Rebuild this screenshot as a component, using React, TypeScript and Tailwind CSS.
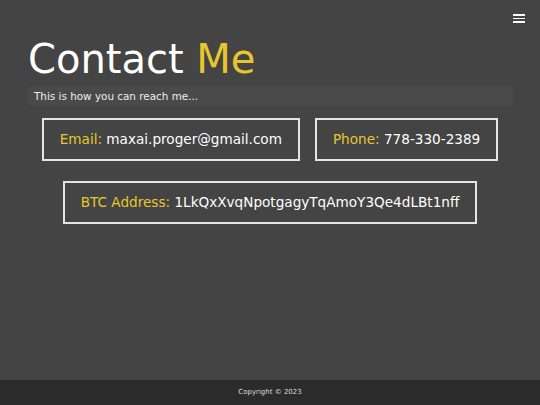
export default function App() {
  return (
    <div
      className="flex h-[405px] w-[540px] flex-col bg-[#444444] text-white"
      style={{ fontFamily: '"DejaVu Sans", Verdana, sans-serif' }}
    >
      <header className="flex h-[36px] items-start justify-end px-[15px] pt-[14px]">
        <button className="flex w-[12px] flex-col gap-[2px]" aria-label="Menu">
          <span className="block h-[1.5px] w-full bg-white" />
          <span className="block h-[1.5px] w-full bg-white" />
          <span className="block h-[1.5px] w-full bg-white" />
        </button>
      </header>

      <main className="flex-1 px-[28px]">
        <h1 className="text-[40px] leading-[46px]">
          Contact <span className="text-[#e8c72c]">Me</span>
        </h1>
        <div className="mt-[5px] mr-[-1px] bg-[#4a4a4a] px-[6px] py-[2px] text-[10.4px] leading-[14px] text-[#eeeeee]">
          This is how you can reach me...
        </div>

        <div className="mt-[13px] flex flex-col items-center gap-[20px]">
          <div className="flex gap-[15px]">
            <div className="border-2 border-[#e4e4e4] px-[16px] py-[11px] text-[13.6px] leading-[17px]">
              <span className="text-[#e8c72c]">Email:</span> maxai.proger@gmail.com
            </div>
            <div className="border-2 border-[#e4e4e4] px-[16px] py-[11px] text-[13.6px] leading-[17px]">
              <span className="text-[#e8c72c]">Phone:</span> 778-330-2389
            </div>
          </div>
          <div className="border-2 border-[#e4e4e4] px-[16px] py-[11px] text-[13.6px] leading-[17px]">
            <span className="text-[#e8c72c]">BTC Address:</span> 1LkQxXvqNpotgagyTqAmoY3Qe4dLBt1nff
          </div>
        </div>
      </main>

      <footer className="flex h-[25px] items-center justify-center bg-[#2b2b2b] text-[7px] text-[#dddddd]">
        Copyright © 2023
      </footer>
    </div>
  );
}
